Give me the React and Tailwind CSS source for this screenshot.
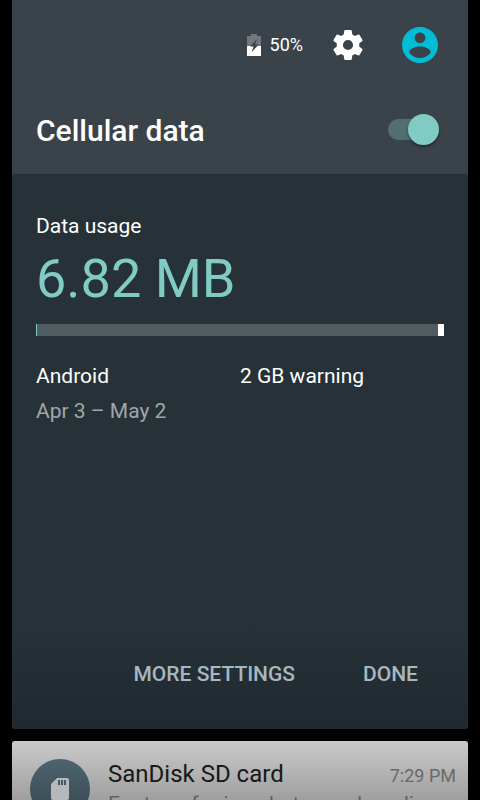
import { useState } from "react";

function BatteryIcon() {
  return (
    <svg width="14" height="22" viewBox="0 0 14 22" aria-hidden="true">
      <path fill="#71787d" d="M4 0h6v2h4v10H0V2h4z" />
      <path fill="#fff" d="M0 12h14v10H0z" />
      <path fill="#3b434a" d="M10 5 3 12.500h3.500L4.500 18.500 11.500 10.500H8z" />
    </svg>
  );
}

function SettingsIcon() {
  return (
    <svg width="36" height="36" viewBox="0 0 24 24" fill="#fff" aria-hidden="true">
      <path d="M19.430 12.980c.04-.32.070-.64.070-.98s-.03-.66-.07-.98l2.110-1.650c.19-.15.240-.42.120-.64l-2-3.460c-.12-.22-.39-.3-.61-.22l-2.490 1c-.52-.4-1.080-.73-1.690-.98l-.38-2.650C14.460 2.180 14.250 2 14 2h-4c-.25 0-.46.18-.49.42l-.38 2.650c-.61.25-1.170.59-1.690.98l-2.490-1c-.23-.09-.49 0-.61.22l-2 3.460c-.13.22-.07.49.12.64l2.110 1.650c-.04.32-.07.65-.07.98s.03.66.07.98l-2.110 1.650c-.19.15-.24.42-.12.64l2 3.460c.12.22.39.3.61.22l2.490-1c.52.4 1.080.73 1.690.98l.38 2.650c.03.24.24.42.49.42h4c.25 0 .46-.18.49-.42l.38-2.650c.61-.25 1.170-.59 1.690-.98l2.490 1c.23.09.49 0 .61-.22l2-3.460c.12-.22.070-.49-.12-.64l-2.110-1.650zM12 15.400a3.400 3.400 0 1 1 0-6.800 3.400 3.400 0 0 1 0 6.800z" />
    </svg>
  );
}

function AccountIcon() {
  return (
    <svg width="36" height="36" viewBox="2 2 20 20" fill="#00bcd4" aria-hidden="true">
      <path d="M12 2C6.480 2 2 6.480 2 12s4.480 10 10 10 10-4.480 10-10S17.520 2 12 2zm0 3c1.660 0 3 1.340 3 3s-1.340 3-3 3-3-1.340-3-3 1.340-3 3-3zm0 14.200c-2.500 0-4.710-1.280-6-3.220.03-1.990 4-3.080 6-3.080 1.990 0 5.970 1.090 6 3.080-1.290 1.940-3.500 3.220-6 3.220z" />
    </svg>
  );
}

function SdCardIcon() {
  return (
    <svg width="18" height="22" viewBox="0 0 18 22" aria-hidden="true">
      <path
        fill="#b5b9bb"
        fillRule="evenodd"
        d="M6 0h10a2 2 0 0 1 2 2v18a2 2 0 0 1-2 2H2a2 2 0 0 1-2-2V6l6-6zM7 2v5h2V2H7zm3 0v5h2V2h-2zm3 0v5h2V2h-2z"
      />
    </svg>
  );
}

function DataSwitch() {
  const [on, setOn] = useState(true);
  return (
    <span className="relative flex h-[31px] w-[51px] items-center">
      <input
        id="cellular"
        type="checkbox"
        role="switch"
        checked={on}
        onChange={(e) => setOn(e.target.checked)}
        className="peer h-[21px] w-12 appearance-none rounded-full bg-[#516f70]"
      />
      <span className="pointer-events-none absolute left-0 size-[31px] rounded-full bg-[#b9bdbf] shadow-[0_2px_3px_rgba(0,0,0,0.4)] peer-checked:left-5 peer-checked:bg-[#80cbc4]" />
    </span>
  );
}

export default function App() {
  return (
    <div className="flex h-screen flex-col gap-3 overflow-hidden bg-black px-3 font-['Roboto',sans-serif] text-[21px] leading-7 text-white">
      <main className="flex shrink-0 flex-col rounded-b-[3px] bg-[#263238]">
        <header className="bg-[#3b434a] px-6">
          <div className="flex h-[90px] items-center justify-end pr-[6px]">
            <BatteryIcon />
            <span className="ml-[9px] text-lg">50%</span>
            <button type="button" aria-label="Settings" className="ml-[27px]">
              <SettingsIcon />
            </button>
            <button type="button" aria-label="Account" className="ml-9">
              <AccountIcon />
            </button>
          </div>
          <div className="flex h-[84px] items-start justify-between pt-6 pr-[5px]">
            <label htmlFor="cellular" className="text-[30px] leading-[34px] font-medium">
              Cellular data
            </label>
            <DataSwitch />
          </div>
        </header>

        <section className="px-6 pt-[38px]">
          <h2>Data usage</h2>
          <p className="text-[54px] leading-[78px] text-[#80cbc4]">6.82 MB</p>
          <div className="mt-[6px] flex h-3 justify-between bg-[#525b60]">
            <span className="w-px bg-[#80cbc4]" />
            <span className="w-[6px] bg-white" />
          </div>
          <div className="mt-[26px] grid grid-cols-2">
            <span>Android</span>
            <span>2 GB warning</span>
          </div>
          <p className="mt-[7px] text-[#a2a6a8]">Apr 3 – May 2</p>
        </section>

        <footer className="mt-[200px] flex h-[104px] items-start justify-end gap-[68px] rounded-b-[3px] bg-linear-to-b from-[#263238] to-[#20292f] pt-[35px] pr-[50px] font-medium text-[#a9b7be]">
          <button type="button">MORE SETTINGS</button>
          <button type="button">DONE</button>
        </footer>
      </main>

      <article className="flex h-24 shrink-0 rounded-[3px] bg-linear-to-b from-[#cacaca] to-[#858585] pt-[18px] pr-3 pl-[18px]">
        <div className="flex size-[60px] shrink-0 items-center justify-center rounded-full bg-linear-to-b from-[#4d646f] to-[#36464e]">
          <SdCardIcon />
        </div>
        <div className="ml-[18px] min-w-0 flex-1">
          <div className="flex items-baseline justify-between">
            <h3 className="text-2xl leading-[30px] text-[#181818]">SanDisk SD card</h3>
            <time className="text-lg text-[#696969]">7:29 PM</time>
          </div>
          <p className="truncate text-[#626262]">For transferring photos and media</p>
        </div>
      </article>
    </div>
  );
}
